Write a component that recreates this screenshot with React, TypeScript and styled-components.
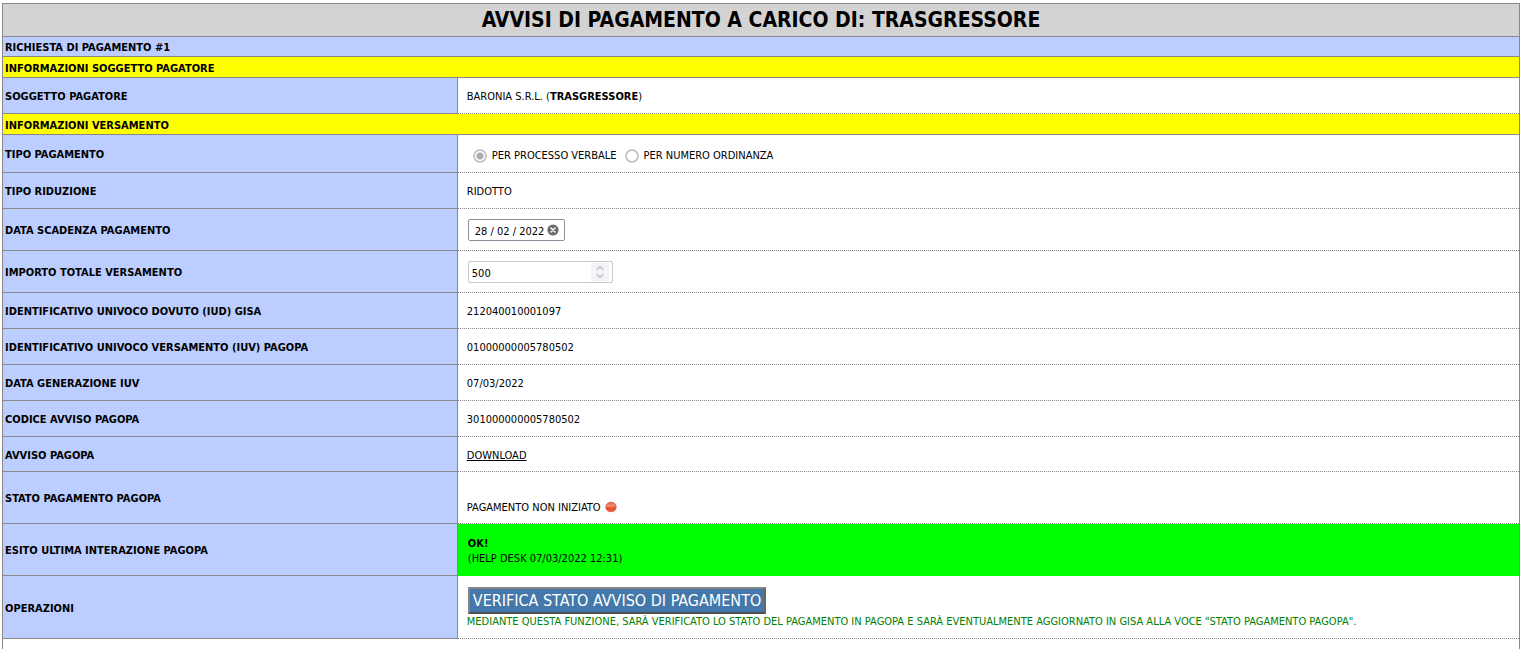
import React from "react";
import styled, { createGlobalStyle, css } from "styled-components";

const line = "#888888";

const GlobalStyle = createGlobalStyle`
  *, *::before, *::after {
    box-sizing: border-box;
  }

  body {
    margin: 3px 1px 0 2px;
    background: #ffffff;
    color: #000000;
    font-family: "DejaVu Sans Condensed", Tahoma, "DejaVu Sans", sans-serif;
    font-size: 11px;
    line-height: 15px;
  }
`;

const DetailTable = styled.table`
  width: 100%;
  table-layout: fixed;
  border: 1px solid ${line};
  border-bottom: 0;
  border-collapse: separate;
  border-spacing: 0;
  text-transform: uppercase;
`;

const LabelColumn = styled.col`
  width: 30%;
`;

const TitleCell = styled.th`
  height: 33px;
  padding: 0;
  border-bottom: 1px solid ${line};
  background: #d3d3d3;
  font-size: 21px;
  line-height: 24px;
  text-align: center;
`;

const BandCell = styled.th<{ $tone: "blue" | "yellow" }>`
  height: ${({ $tone }) => ($tone === "blue" ? 20 : 21)}px;
  padding: 2px 2px 0;
  border-bottom: 1px solid ${line};
  background: ${({ $tone }) => ($tone === "blue" ? "#bbceff" : "#ffff00")};
  text-align: left;
`;

const LabelCell = styled.th`
  padding: 2px 2px 0;
  border-right: 1px solid ${line};
  border-bottom: 1px solid ${line};
  background: #bbceff;
  text-align: left;
`;

const ValueCell = styled.td<{ $height: number; $ok?: boolean; $low?: boolean }>`
  height: ${({ $height }) => $height}px;
  padding: ${({ $low }) => ($low ? 20 : 2)}px 9px 0;
  border-bottom: 1px dotted ${line};
  ${({ $ok }) =>
    $ok &&
    css`
      background: #00ff00;
      border-bottom-color: #00ff00;
    `}
`;

const EmptyCell = styled.td`
  height: 10px;
  padding: 0;
`;

const RadioGroup = styled.div`
  display: flex;
  align-items: center;
  gap: 8px;
  padding: 2px 6px 0;
`;

const RadioLabel = styled.label`
  display: flex;
  align-items: center;
  gap: 5px;
`;

const Radio = styled.input`
  appearance: none;
  width: 14px;
  height: 14px;
  margin: 0;
  border: 2px solid #c7c7cc;
  border-radius: 50%;
  background: #ffffff;

  &:checked {
    background: radial-gradient(circle, #aaaab0 3px, #ffffff 4px);
  }
`;

const Field = styled.div<{ $width: number; $faded?: boolean }>`
  display: flex;
  align-items: center;
  width: ${({ $width }) => $width}px;
  height: 22px;
  margin: 0 0 2px 1px;
  border: 1px solid ${({ $faded }) => ($faded ? "#c7c7cc" : "#8f8f9d")};
  border-radius: 2px;
  background: #ffffff;
`;

const FieldInput = styled.input<{ $inset: number }>`
  flex: 1;
  min-width: 0;
  height: 20px;
  padding: 3px 0 0 ${({ $inset }) => $inset}px;
  border: 0;
  outline: 0;
  background: transparent;
  color: #000000;
  font: inherit;
  appearance: textfield;

  &::-webkit-inner-spin-button {
    appearance: none;
    margin: 0;
  }
`;

const ClearButton = styled.button`
  display: flex;
  margin: 0 5px 0 0;
  padding: 0;
  border: 0;
  background: transparent;
`;

const Spinner = styled.span`
  display: flex;
  margin-right: 3px;
  background: #f4f4f6;
`;

const DownloadLink = styled.a`
  color: #000000;
  text-decoration: underline;
`;

const Status = styled.div`
  display: flex;
  align-items: center;
  gap: 4px;
`;

const Light = styled.svg`
  margin-bottom: 2px;
`;

const Outcome = styled.div`
  padding-left: 1px;
`;

const VerifyButton = styled.button`
  display: block;
  height: 27px;
  margin: 0 0 0 1px;
  padding: 0 3px;
  border: 2px solid;
  border-color: #858585 #666666 #505050 #858585;
  background: #4477aa;
  color: #ffffff;
  font-family: inherit;
  font-size: 16px;
  line-height: 22px;
  text-transform: uppercase;
`;

const Hint = styled.div`
  color: #008000;
`;

function ClearIcon() {
  return (
    <svg width="12" height="12" viewBox="0 0 12 12" aria-hidden="true">
      <circle cx="6" cy="6" r="5.6" fill="#6b6b6b" />
      <path d="M4 4l4 4M8 4l-4 4" stroke="#ffffff" strokeWidth="1.5" strokeLinecap="round" />
    </svg>
  );
}

function SpinIcon() {
  return (
    <svg width="18" height="18" viewBox="0 0 18 18" fill="none" stroke="#c0c0c6" strokeWidth="1.5" aria-hidden="true">
      <path d="M6 6.5l3-3 3 3M6 11.5l3 3 3-3" strokeLinecap="round" strokeLinejoin="round" />
    </svg>
  );
}

function RedLight() {
  return (
    <Light width="12" height="12" viewBox="0 0 12 12" role="img" aria-label="Non iniziato">
      <defs>
        <linearGradient id="light" x1="0" y1="0" x2="0" y2="1">
          <stop offset="0" stopColor="#dc6a50" />
          <stop offset="0.4" stopColor="#f09078" />
          <stop offset="0.6" stopColor="#e84a26" />
          <stop offset="1" stopColor="#f0623a" />
        </linearGradient>
      </defs>
      <ellipse cx="6" cy="6" rx="5.2" ry="4.8" fill="url(#light)" stroke="#d4472c" strokeWidth="0.7" />
    </Light>
  );
}

interface RowProps {
  label: string;
  height?: number;
  ok?: boolean;
  low?: boolean;
  htmlFor?: string;
  children: React.ReactNode;
}

function Row({ label, height = 36, ok, low, htmlFor, children }: RowProps) {
  return (
    <tr>
      <LabelCell scope="row">{htmlFor ? <label htmlFor={htmlFor}>{label}</label> : label}</LabelCell>
      <ValueCell $height={height} $ok={ok} $low={low}>
        {children}
      </ValueCell>
    </tr>
  );
}

function Band({ tone, children }: { tone: "blue" | "yellow"; children: React.ReactNode }) {
  return (
    <tr>
      <BandCell colSpan={2} $tone={tone}>
        {children}
      </BandCell>
    </tr>
  );
}

export default function App() {
  return (
    <>
      <GlobalStyle />
      <DetailTable>
        <colgroup>
          <LabelColumn />
          <col />
        </colgroup>
        <tbody>
          <tr>
            <TitleCell colSpan={2}>Avvisi di pagamento a carico di: trasgressore</TitleCell>
          </tr>
          <Band tone="blue">Richiesta di pagamento #1</Band>
          <Band tone="yellow">Informazioni soggetto pagatore</Band>
          <Row label="Soggetto pagatore">
            Baronia s.r.l. (<b>trasgressore</b>)
          </Row>
          <Band tone="yellow">Informazioni versamento</Band>
          <Row label="Tipo pagamento" height={38}>
            <RadioGroup>
              <RadioLabel>
                <Radio type="radio" name="tipo" disabled defaultChecked />
                Per processo verbale
              </RadioLabel>
              <RadioLabel>
                <Radio type="radio" name="tipo" disabled />
                Per numero ordinanza
              </RadioLabel>
            </RadioGroup>
          </Row>
          <Row label="Tipo riduzione">Ridotto</Row>
          <Row label="Data scadenza pagamento" height={42} htmlFor="scadenza">
            <Field $width={97}>
              <FieldInput id="scadenza" type="text" $inset={6} defaultValue="28 / 02 / 2022" />
              <ClearButton type="button" aria-label="Cancella data">
                <ClearIcon />
              </ClearButton>
            </Field>
          </Row>
          <Row label="Importo totale versamento" height={42} htmlFor="importo">
            <Field $width={145} $faded>
              <FieldInput id="importo" type="number" $inset={3} defaultValue="500" readOnly />
              <Spinner>
                <SpinIcon />
              </Spinner>
            </Field>
          </Row>
          <Row label="Identificativo univoco dovuto (IUD) GISA">212040010001097</Row>
          <Row label="Identificativo univoco versamento (IUV) PagoPA">01000000005780502</Row>
          <Row label="Data generazione IUV">07/03/2022</Row>
          <Row label="Codice avviso PagoPA">301000000005780502</Row>
          <Row label="Avviso PagoPA" height={35}>
            <DownloadLink href="#download">Download</DownloadLink>
          </Row>
          <Row label="Stato pagamento PagoPA" height={52} low>
            <Status>
              Pagamento non iniziato
              <RedLight />
            </Status>
          </Row>
          <Row label="Esito ultima interazione PagoPA" height={52} ok>
            <Outcome>
              <b>OK!</b>
              <br />
              (Help desk 07/03/2022 12:31)
            </Outcome>
          </Row>
          <Row label="Operazioni" height={63}>
            <VerifyButton type="button">Verifica stato avviso di pagamento</VerifyButton>
            <Hint>
              Mediante questa funzione, sarà verificato lo stato del pagamento in PagoPA e sarà eventualmente aggiornato
              in GISA alla voce "Stato pagamento PagoPA".
            </Hint>
          </Row>
          <tr>
            <EmptyCell colSpan={2} />
          </tr>
        </tbody>
      </DetailTable>
    </>
  );
}
